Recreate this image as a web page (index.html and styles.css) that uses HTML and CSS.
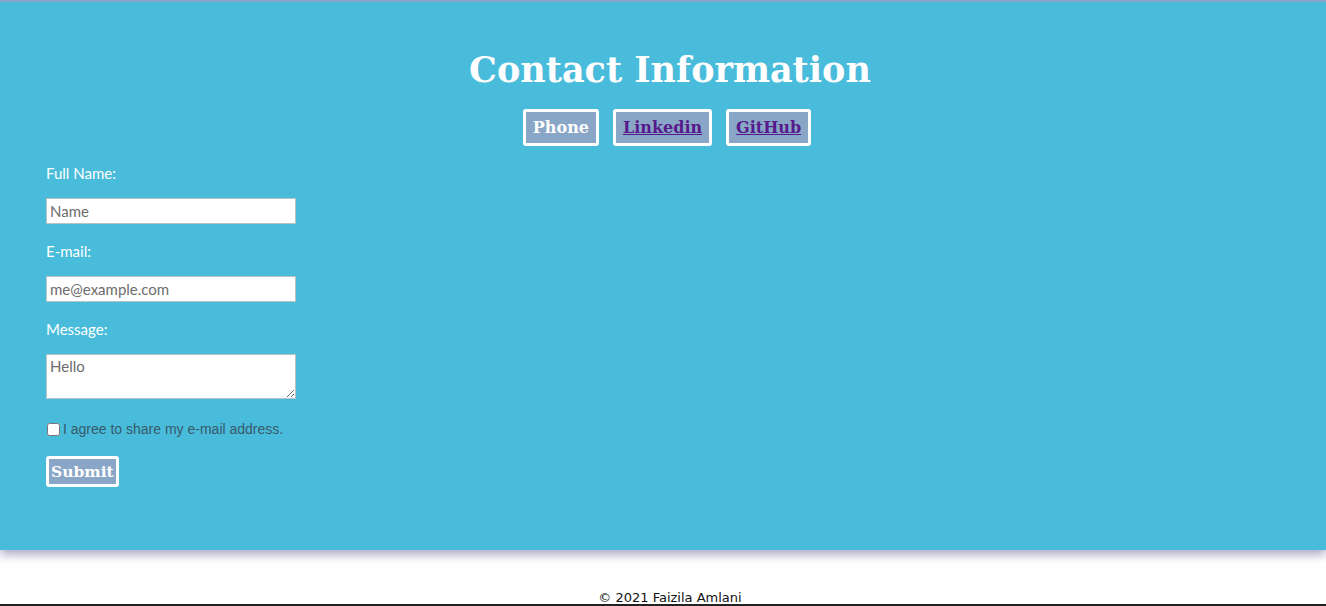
FILE: index.html
```html
<!DOCTYPE html>
<html>
<head>
<meta charset="utf-8">
<title>Contact</title>
<link rel="stylesheet" href="styles.css">
</head>
<body>
<section class="contact">
  <h1 class="title">Contact Information</h1>
  <div class="links">
    <span class="pill">Phone</span>
    <a class="pill" href="#">Linkedin</a>
    <a class="pill" href="#">GitHub</a>
  </div>
  <form class="form">
    <label class="lbl" for="name">Full Name:</label>
    <input class="field" id="name" type="text" placeholder="Name">
    <label class="lbl" for="email">E-mail:</label>
    <input class="field" id="email" type="email" placeholder="me@example.com">
    <label class="lbl" for="msg">Message:</label>
    <textarea class="field area" id="msg" placeholder="Hello"></textarea>
    <div class="agree"><input class="check" type="checkbox" id="ag"><label for="ag">I agree to share my e-mail address.</label></div>
    <button class="pill submit" type="button">Submit</button>
  </form>
</section>
<footer class="foot">© 2021 Faizila Amlani</footer>
</body>
</html>
```

FILE: styles.css
```css
* { box-sizing: border-box; }
html, body { margin: 0; padding: 0; background: #fff; }
body { height: 606px; overflow: hidden; }
.contact {
  background: #4abcdb;
  border-top: 2px solid #86a6c8;
  height: 550px;
  padding: 0 46px;
  box-shadow: 0 4px 10px rgba(90, 80, 140, 0.55);
  position: relative;
  z-index: 1;
}
.title {
  margin: 0;
  padding-top: 45px;
  text-align: center;
  font-family: "DejaVu Serif", serif;
  font-weight: bold;
  font-size: 35px;
  line-height: 46px;
  color: #fff;
  padding-left: 14px;
}
.links {
  display: flex;
  justify-content: center;
  gap: 14px;
  margin-top: 16px;
  padding-left: 8px;
}
.pill {
  display: inline-block;
  background: #8aa6c6;
  border: 3px solid #fff;
  border-radius: 3px;
  font-family: "DejaVu Serif", serif;
  font-weight: bold;
  font-size: 16px;
  line-height: 31px;
  padding: 0 7px;
  color: #fff;
}
a.pill { color: #551a8b; text-decoration: underline; }
.form {
  display: flex;
  flex-direction: column;
  align-items: flex-start;
  margin-top: 20px;
}
.lbl {
  font-family: Lato, "Open Sans", sans-serif;
  font-size: 15px;
  color: #fff;
  line-height: 14px;
  margin-bottom: 18px;
}
.field {
  width: 250px;
  height: 26px;
  margin: 0 0 20px;
  border: 1px solid #b8c4c4;
  background: #fff;
  font-family: Lato, "Open Sans", sans-serif;
  font-size: 15px;
  padding: 1px 3px;
  color: #333;
}
.field::placeholder { color: #6d6d6d; }
.area { height: 45px; resize: vertical; padding-top: 2px; margin-bottom: 22px; }
.agree {
  display: flex;
  align-items: center;
  font-family: "Liberation Sans", Arial, sans-serif;
  font-size: 14px;
  color: #37596a;
}
.check { margin: 0 3px 0 1px; width: 13px; height: 13px; }
.submit {
  margin-top: 19px;
  font-size: 15.5px;
  line-height: 25px;
  padding: 0 2px;
  cursor: pointer;
}
.foot {
  text-align: center;
  font-family: "DejaVu Sans", Verdana, sans-serif;
  font-size: 13px;
  color: #111;
  padding-left: 14px;
  margin-top: 40px;
  height: 16px;
  border-bottom: 2px solid #222;
  line-height: 16px;
}
```
